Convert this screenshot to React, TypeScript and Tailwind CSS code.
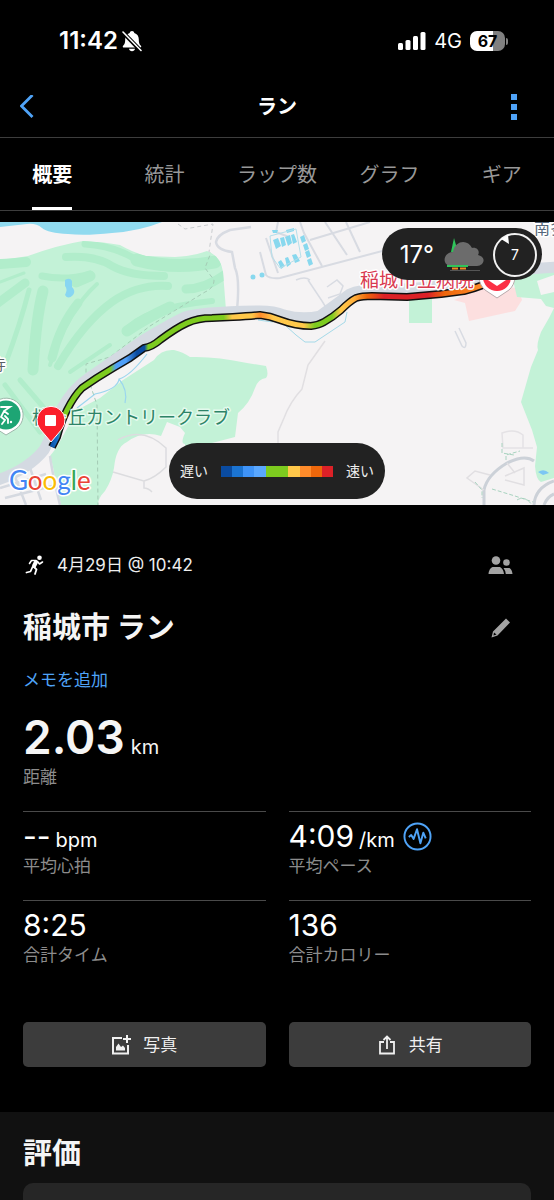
import React from 'react';

const ROUTE =
  'M52 447 L57 437 Q61 422 67 410 Q74 396 82 388 Q96 378 113 368 L130 358 L144 348 Q152 347 160 340 Q176 328 187 323 Q198 318 212 318 L233 317 Q250 316 260 315 Q270 316 280 320 Q296 326 311 326 Q319 325 324 322 Q333 317 341 310 Q350 301 356 298 Q362 296 372 296 L407 297 L441 294 L464 291 Q473 289 483 285';

const ROAD =
  'M-5 481 Q28 470 44 450 Q53 434 61 410 Q72 389 90 377 L142 341 Q170 324 185 317 Q200 312 260 311 Q274 311 284 315 Q302 320 320 316 Q338 303 350 294 Q362 289 380 290 Q440 288 485 278 Q520 268 560 267';

const LEGEND = [
  'bg-[#0a4ba0]',
  'bg-[#1b74d2]',
  'bg-[#3f94f8]',
  'bg-[#5aa8ff]',
  'bg-[#7dcb1f]',
  'bg-[#7dcb1f]',
  'bg-[#ffc84a]',
  'bg-[#ff8c2b]',
  'bg-[#ee670b]',
  'bg-[#dc2127]',
];

const TABS = ['概要', '統計', 'ラップ数', 'グラフ', 'ギア'];

const StatusBar: React.FC = () => (
  <div className="flex h-[74px] items-center justify-between pt-2 pr-[46px] pl-[59px] text-white">
    <div className="flex items-center gap-1">
      <span className="text-2xl leading-7 font-semibold">11:42</span>
      <svg className="h-6 w-5" viewBox="0 0 20 24" fill="none">
        <path d="M10 2c1.300 0 2.100.8 2.300 1.900 2.900.9 4.500 3.300 4.500 6.300 0 4.200.8 5.200 2.100 6.500.7.8.3 1.800-.8 1.800H1.900c-1.100 0-1.500-1-.8-1.800 1.300-1.300 2.100-2.300 2.100-6.500 0-3 1.600-5.400 4.500-6.300C7.900 2.800 8.700 2 10 2z" fill="#fff" />
        <path d="M7 19.700h6c-.2 1.600-1.400 2.500-3 2.500s-2.800-.9-3-2.500z" fill="#fff" />
        <path d="M0 2.500l18.500 19" stroke="#000" strokeWidth="4" />
        <path d="M1 3l18 18.500" stroke="#fff" strokeWidth="1.600" strokeLinecap="round" />
      </svg>
    </div>
    <div className="flex items-center gap-2">
      <svg className="h-5 w-7" viewBox="0 0 28 20" fill="#fff">
        <rect x="0" y="12" width="5" height="7" rx="1.500" />
        <rect x="7.500" y="9" width="5" height="10" rx="1.500" />
        <rect x="15" y="5" width="5" height="14" rx="1.500" />
        <rect x="22.500" y="1" width="5" height="18" rx="1.500" />
      </svg>
      <span className="text-xl leading-6">4G</span>
      <div className="flex items-center gap-px">
        <div className="flex h-5 w-[35px] items-center justify-center rounded-[7px] bg-linear-to-r from-white from-67% to-[#808080] to-67% text-base leading-5 font-bold text-black">
          67
        </div>
        <div className="h-[7px] w-[2px] rounded-r bg-[#808080]" />
      </div>
    </div>
  </div>
);

const TopBar: React.FC = () => (
  <header className="flex h-16 items-center justify-between border-b border-[#3d3d3d] px-5 pt-[2px]">
    <button type="button" aria-label="戻る" className="w-8">
      <svg className="h-6 w-[14px]" viewBox="0 0 14 24" fill="none" stroke="#4fa3f7" strokeWidth="2.800">
        <path d="M12.500 0L1.500 11l11 11" />
      </svg>
    </button>
    <h1 className="text-xl leading-6 font-bold text-white">ラン</h1>
    <button type="button" aria-label="メニュー" className="flex w-8 flex-col items-end gap-1 pr-[17px]">
      <span className="size-[6px] bg-[#4fa3f7]" />
      <span className="size-[6px] bg-[#4fa3f7]" />
      <span className="size-[6px] bg-[#4fa3f7]" />
    </button>
  </header>
);

const Tabs: React.FC = () => (
  <nav className="border-b border-[#3d3d3d]">
    <div className="-mx-1 grid h-[72px] grid-cols-5" role="tablist">
      {TABS.map((tab, i) => (
        <button
          key={tab}
          type="button"
          role="tab"
          aria-selected={i === 0}
          className={`flex flex-col items-center text-xl leading-6 whitespace-nowrap ${
            i === 0 ? 'font-bold text-white' : 'text-[#989898]'
          }`}
        >
          <span className={`flex h-full items-center border-b-[3px] pt-1 ${i === 0 ? 'border-white' : 'border-transparent'}`}>
            {tab}
          </span>
        </button>
      ))}
    </div>
  </nav>
);

const RouteMap: React.FC = () => (
  <svg
    className="block h-[283px] w-full"
    viewBox="0 222 554 283"
    preserveAspectRatio="xMidYMid slice"
    fill="none"
    role="img"
    aria-label="ルートマップ"
  >
    <defs>
      <linearGradient id="pace" gradientUnits="userSpaceOnUse" x1="50" y1="0" x2="484" y2="0">
        <stop offset="0" stopColor="#0a4ba0" />
        <stop offset="0.018" stopColor="#1b74d2" />
        <stop offset="0.03" stopColor="#7dcb1f" />
        <stop offset="0.138" stopColor="#7dcb1f" />
        <stop offset="0.152" stopColor="#4f9ff8" />
        <stop offset="0.175" stopColor="#4f9ff8" />
        <stop offset="0.2" stopColor="#0a4ba0" />
        <stop offset="0.218" stopColor="#0a4ba0" />
        <stop offset="0.226" stopColor="#7dcb1f" />
        <stop offset="0.4" stopColor="#7dcb1f" />
        <stop offset="0.42" stopColor="#ffc84a" />
        <stop offset="0.465" stopColor="#ffc84a" />
        <stop offset="0.485" stopColor="#ff8c2b" />
        <stop offset="0.515" stopColor="#ffc84a" />
        <stop offset="0.585" stopColor="#ffc84a" />
        <stop offset="0.61" stopColor="#7dcb1f" />
        <stop offset="0.65" stopColor="#7dcb1f" />
        <stop offset="0.67" stopColor="#ffc84a" />
        <stop offset="0.7" stopColor="#ffb03c" />
        <stop offset="0.73" stopColor="#ee670b" />
        <stop offset="0.77" stopColor="#dc2127" />
        <stop offset="0.87" stopColor="#dc2127" />
        <stop offset="0.91" stopColor="#ee670b" />
        <stop offset="1" stopColor="#ff8c2b" />
      </linearGradient>
      <clipPath id="course">
        <path d="M0 259Q12 259 28 256Q58 245 83 241Q105 242 120 245Q132 252 146 256L175 257Q194 256 207 251Q221 256 223 272L226 310Q200 312 185 320L142 343L90 379Q72 391 61 412L44 452Q28 468 0 477Z" />
      </clipPath>
    </defs>

    <rect x="0" y="222" width="554" height="283" fill="#f5f3f4" />
    <path d="M0 222H162Q140 231 112 233Q85 236 68 234Q48 233 42 228Q36 223 27 224L0 227Z" fill="#90daef" />

    {/* golf course */}
    <g clipPath="url(#course)">
      <rect x="0" y="222" width="240" height="283" fill="#c3f2d7" />
      <g stroke="#b1edcb" strokeLinecap="round">
        <path d="M0 264L26 262" strokeWidth="10" />
        <path d="M66 257Q95 255 112 266Q130 276 164 276" strokeWidth="8" />
        <path d="M85 244Q115 246 137 260" strokeWidth="7" />
        <path d="M137 260Q175 270 215 262" strokeWidth="13" />
        <path d="M42 276Q66 281 90 274" strokeWidth="7" />
        <path d="M76 282L90 276" strokeWidth="11" />
        <path d="M24 273L0 282" strokeWidth="3" />
        <path d="M25 283L-2 303" strokeWidth="9" />
        <path d="M43 291Q36 318 33 370" strokeWidth="11" />
        <path d="M29 290Q20 325 6 362" strokeWidth="5" />
        <path d="M97 284Q68 310 50 365" strokeWidth="4" />
        <path d="M78 303Q60 325 52 358" strokeWidth="9" />
        <path d="M168 286Q138 284 112 302Q84 322 58 366" strokeWidth="8" />
        <path d="M186 289Q205 289 226 274" strokeWidth="9" />
        <path d="M125 332Q142 308 212 301" strokeWidth="6" />
        <path d="M127 331Q146 318 170 307" strokeWidth="11" />
        <path d="M110 345L70 372" strokeWidth="4" />
        <path d="M20 380L50 415M5 385L40 432" strokeWidth="5" />
      </g>
      <path d="M65 280Q70 277 72 281V287Q76 291 73 295Q68 300 65 295Q68 289 65 286Z" fill="#88d6f2" />
      <path d="M178 224L185 229L214 224L210 255L205 268L214 280Q214 288 205 292L166 316L150 326L110 357L86 364V378" stroke="#a4cbb5" strokeDasharray="4 3" />
    </g>
    <path d="M178 224L185 229L213 224L209 252" stroke="#c9cccf" strokeDasharray="4 3" />

    {/* southern woods */}
    <path d="M154 360Q161 349 174 350Q183 352 190 357Q215 356 247 363L266 366Q269 375 266 378Q258 379 255 388Q250 403 238 413L235 437L185 450V444Q180 444 185 433L180 427L167 422L161 436Q143 430 127 442Q116 447 114 468Q112 480 105 491Q98 498 98 505H61Q59 493 55 487Q56 475 50 456L57 447L77 410L100 398L123 380Z" fill="#c3f2d7" />
    <path d="M118 440Q143 426 166 448V467Q155 478 144 481M113 472L144 481V488Q148 488 152 492" stroke="#dcdcdf" strokeWidth="1.500" />
    <path d="M88 378L97 405L98 505" stroke="#a4cbb5" strokeDasharray="4 3" />
    <path d="M147 354Q130 376 119 379Q118 389 95 394L77 408M119 379Q128 390 125 403" stroke="#9bd6ee" strokeWidth="1.200" />
    <path d="M12 469L26 505M27 459L41 500M5 498L52 486M0 488L46 474M50 456Q52 472 60 505" stroke="#d5d9e0" strokeWidth="2.500" />

    {/* right hand parks and hospital grounds */}
    <path d="M409 299L432 296V323H409Z" fill="#c3f2d7" />
    <path d="M454 300L485 285L518 288L522 300L515 311L469 321L465 303Z" fill="#fcdfdf" />
    <path d="M513 280L554 268V308L546 306L541 299L517 297Z" fill="#c3f2d7" />
    <path d="M537 281L554 275V292L541 295Z" fill="#f5f3f4" />
    <path d="M554 308L549 318L541 332Q536 345 538 350L531 367L521 402L532 430L537 447L535 466Q536 480 541 482L554 478Z" fill="#c3f2d7" />
    <path d="M538 472Q544 468 549 473L543 475Z" fill="#7cc6f3" />

    {/* streets */}
    <g stroke="#d8dbe2" strokeWidth="2.500">
      <path d="M251 227L230 230Q217 235 216 242Q217 250 232 252L235 268Q240 278 237 310" />
      <path d="M260 252L266 275Q269 279 280 278L405 245M278 222L276 232L289 237M266 238L278 273" strokeWidth="2" />
      <path d="M300 222L304 233L322 266M325 222L347 255M346 222L360 252M310 240L370 222" strokeWidth="2" />
      <path d="M308 280L322 301L330 314M327 287L337 280L343 286L340 294L328 298M310 280Q305 276 296 280" strokeWidth="1.500" />
      <path d="M325 341L308 365L302 389Q290 402 284 418L278 432V443" strokeWidth="1.500" stroke="#e1dfe2" />
      <path d="M455 331L462 346Q466 350 466 343L459 328" strokeWidth="1.500" />
      <path d="M502 433Q515 428 523 435V448H503Z M505 448H533" strokeWidth="1.500" stroke="#e4e2e5" />
      <path d="M484 505V490Q487 475 507 463Q525 454 534 461" stroke="#ccd1d8" strokeWidth="3" />
      <path d="M534 505Q535 488 554 481M544 505Q547 497 554 494" stroke="#ccd1d8" strokeWidth="3" />
      <path d="M484 490L467 478L475 471L490 475M505 476L524 468V485L505 480M507 463L515 473" strokeWidth="1.500" stroke="#e1dfe2" />
    </g>
    <path d="M502 443V453L514 455M506 460V455L520 451M475 482L482 490V498M492 489L515 496L533 502M517 500Q525 495 532 505" stroke="#a9d3c0" strokeDasharray="4 2" />

    {/* housing blocks */}
    <g fill="#88d8ee">
      <path d="M273 240l5-2 3 8-5 3zM280 238l4-1 2 8-4 2zM285 237l5-2 2 8-4 3zM291 235l3-1 3 8-4 2zM272 230h6l-1 3h-4zM286 230l8-2v3l-7 2zM300 237l4-2 2 6-4 2zM303 245l4-2 2 6-4 2zM305 252l4-2 2 6-4 2zM307 260l4-2 2 6-4 2zM278 262l3-2 4 6-4 3zM285 258l3-1 3 7-4 3zM292 255l4-1 4 7-5 2z" />
      <circle cx="253" cy="277" r="2.500" />
      <circle cx="262" cy="275" r="2.500" />
    </g>
    <path d="M270 236L296 229L301 257L280 268L272 257Z" stroke="#b5dfea" strokeWidth="1" />

    <path d="M286 326L296 335L305 342H315L345 322L347 312M258 320L273 322" stroke="#a4d9e8" />
    <path d={ROAD} stroke="#d4dae2" strokeWidth="11" />
    <path d={ROUTE} stroke="#111" strokeWidth="8" strokeLinejoin="round" />
    <path d={ROUTE} stroke="url(#pace)" strokeWidth="5" strokeLinejoin="round" />

    {/* place names */}
    <g fontFamily="'Noto Sans CJK JP', sans-serif" stroke="#fff" strokeWidth="3" strokeLinejoin="round" paintOrder="stroke">
      <text x="32" y="424" fontSize="18" fill="#2d8467" stroke="#e3faed">桜ヶ丘カントリークラブ</text>
      <text x="360" y="287" fontSize="19" fill="#d93a50">稲城市立病院</text>
      <text x="534" y="234" fontSize="16" fill="#54667a">南多</text>
      <text x="-9" y="370" fontSize="15" fill="#5c6164">寺</text>
    </g>

    {/* hospital pin */}
    <path d="M497 298L485 290A18 18 0 1 1 509 290Z" fill="#fff" stroke="#b8a9ab" strokeWidth="1" />
    <circle cx="497" cy="277" r="14" fill="#fb3045" />
    <path d="M488 275V280L497 286L506 280V275Z" fill="#fff" />

    {/* course pin */}
    <path d="M6 435L-5 428A17 17 0 1 1 16 429Z" fill="#fff" stroke="#9fb8ab" strokeWidth="1" />
    <circle cx="6" cy="415" r="14.500" fill="#1da574" />
    <g stroke="#fff" strokeWidth="1.800" strokeLinecap="round">
      <path d="M1 407H10L4 411L1 417L5 420L2 424M5 416L8 419V423M4 411L8 414" />
    </g>
    <circle cx="11" cy="422" r="1.200" fill="#fff" />

    {/* finish pin */}
    <path d="M51 442L40 429A14 14 0 1 1 62 429Z" fill="#fb1f2b" stroke="#fff" strokeWidth="1" />
    <rect x="45" y="415" width="11" height="11" rx="1" fill="#fff" />

    <text x="9" y="490" fontFamily="Lato, sans-serif" fontSize="26" stroke="#fff" strokeWidth="3" strokeLinejoin="round" paintOrder="stroke">
      <tspan fill="#4285f4">G</tspan>
      <tspan fill="#ea4335">o</tspan>
      <tspan fill="#fbbc05">o</tspan>
      <tspan fill="#4285f4">g</tspan>
      <tspan fill="#34a853">l</tspan>
      <tspan fill="#ea4335">e</tspan>
    </text>
  </svg>
);

const WeatherPill: React.FC = () => (
  <div className="absolute top-[6px] right-3 flex h-[52px] items-center rounded-full bg-[#222] pt-px pr-[4px] pl-[18px] text-white">
    <span className="text-2xl leading-8">17°</span>
    <svg className="ml-2 h-9 w-11" viewBox="0 0 44 36" fill="none">
      <path d="M12 1L16 15H9Z" fill="#2fc45a" />
      <path d="M10 29C-1 29 1 15 11 15C13 3 26 2 30 11C36 10 38 15 36 18C45 20 42 29 35 29Z" fill="#6c6c6c" />
      <path d="M5 29H26" stroke="#2fc45a" strokeWidth="2" />
      <path d="M10 31.500H16M18 31.500H24" stroke="#f08a24" strokeWidth="2" />
      <path d="M8 33.500H38" stroke="#555" />
    </svg>
    <svg className="ml-[6px] h-[46px] w-[46px]" viewBox="0 0 46 46" fill="none">
      <circle cx="23" cy="23" r="21" stroke="#f2f2f2" strokeWidth="2" />
      <path d="M9 7L16 3L17 12Z" fill="#fff" />
      <text x="23" y="28" textAnchor="middle" fontSize="14" fill="#fff">7</text>
    </svg>
  </div>
);

const PaceLegend: React.FC = () => (
  <div className="absolute bottom-[6px] left-1/2 flex h-14 w-[216px] -translate-x-1/2 items-center justify-between rounded-full bg-[#222] px-[11px] text-sm leading-5 text-[#eee]">
    <span>遅い</span>
    <div className="flex h-[11px] w-[113px]">
      {LEGEND.map((color, i) => (
        <span key={i} className={`flex-1 ${color}`} />
      ))}
    </div>
    <span>速い</span>
  </div>
);

interface StatProps {
  value: string;
  unit?: string;
  label: string;
  icon?: React.ReactNode;
}

const Stat: React.FC<StatProps> = ({ value, unit, label, icon }) => (
  <div className="border-t border-[#4a4a4a] pt-[6px] pb-[22px]">
    <div className="flex h-9 items-center">
      <p className="text-[30px] leading-9 text-white">
        {value}
        {unit && <span className="ml-[5px] text-xl">{unit}</span>}
      </p>
      {icon}
    </div>
    <p className="text-[17px] leading-6 text-[#8c8c8c]">{label}</p>
  </div>
);

const PaceIcon: React.FC = () => (
  <svg className="ml-2 size-[29px]" viewBox="0 0 30 30" fill="none" stroke="#4fa3f7" strokeWidth="2">
    <circle cx="15" cy="15" r="13.500" />
    <path d="M6 15.500L8.500 13.500L11 17.500L14.500 7.500L18 22L21 11L23.500 17" strokeLinejoin="round" />
  </svg>
);

const App: React.FC = () => {
  return (
    <div className="flex min-h-screen flex-col bg-black font-['Inter','Noto_Sans_CJK_JP',sans-serif]">
      <StatusBar />
      <TopBar />
      <Tabs />

      <div className="relative mt-[11px]">
        <RouteMap />
        <WeatherPill />
        <PaceLegend />
      </div>

      <main className="px-[23px] pt-12 pb-[45px]">
        <div className="flex h-6 items-center justify-between pr-[18px]">
          <div className="flex items-center gap-[13px] text-[#eee]">
            <svg className="ml-[2px] h-5 w-[19px]" viewBox="0 0 19 20" fill="none" stroke="#fff" strokeLinecap="round" strokeLinejoin="round">
              <circle cx="14.500" cy="2.800" r="2.300" fill="#fff" stroke="none" />
              <path d="M11 7L9 11" strokeWidth="4" />
              <path d="M11 5.500L6.500 5.500L4.500 8.500M12.500 6.500L14.500 9L17.500 7" strokeWidth="1.600" />
              <path d="M9 12L11.500 14.500L10 19M7.500 12L5.500 16.500L1.500 17.500" strokeWidth="1.800" />
            </svg>
            <span className="text-[17px] leading-6">4月29日 @ 10:42</span>
          </div>
          <svg className="h-5 w-[25px]" viewBox="0 0 25 20" fill="#a3a3a3">
            <circle cx="8" cy="5.500" r="4.300" />
            <circle cx="18.500" cy="7.500" r="3.300" />
            <path d="M.5 19Q1 13.500 4.500 12H12Q15.500 14 16 19ZM15.500 13H21.500Q24 14.500 24.500 19H17.800Q17.500 15.500 15.500 13Z" />
          </svg>
        </div>

        <div className="mt-[31px] flex h-10 items-center justify-between pr-[21px]">
          <h2 className="text-[29px] leading-10 font-bold text-[#f5f5f5]">稲城市 ラン</h2>
          <button type="button" aria-label="編集">
            <svg className="block h-5 w-[19px]" viewBox="0 0 19 20" fill="#a3a3a3">
              <path d="M15 .5L19 4.500L6.500 17.500L.5 19.500L2 13.500ZM3 14.500L2.500 17.500L5.500 16.500Z" fillRule="evenodd" />
            </svg>
          </button>
        </div>

        <a href="#memo" className="mt-5 block w-fit text-[17px] leading-6 text-[#4fa3f7]">
          メモを追加
        </a>

        <p className="mt-[21px] text-[46px] leading-12 font-semibold text-[#f5f5f5]">
          2.03
          <span className="ml-[6px] text-xl font-normal">km</span>
        </p>
        <p className="mt-1 text-[17px] leading-6 text-[#8c8c8c]">距離</p>

        <div className="mt-[22px] grid grid-cols-2 gap-x-[23px]">
          <Stat value="--" unit="bpm" label="平均心拍" />
          <Stat value="4:09" unit="/km" label="平均ペース" icon={<PaceIcon />} />
          <Stat value="8:25" label="合計タイム" />
          <Stat value="136" label="合計カロリー" />
        </div>

        <div className="mt-[33px] grid grid-cols-2 gap-x-[23px] text-[17px] leading-6 text-[#f0f0f0]">
          <button type="button" className="flex h-[45px] items-center justify-center gap-3 rounded-[5px] bg-[#3c3c3c]">
            <svg className="size-5" viewBox="0 0 20 20" fill="none" stroke="#f0f0f0" strokeWidth="2">
              <path d="M11 3H2V18.500H17V10M16 0V8M12 4H20" />
              <path d="M5 15.500V12L7.500 8.500L10 12L12 10.500L14 13V15.500Z" fill="#f0f0f0" stroke="none" />
            </svg>
            写真
          </button>
          <button type="button" className="flex h-[45px] items-center justify-center gap-3 rounded-[5px] bg-[#3c3c3c]">
            <svg className="size-5" viewBox="0 0 20 20" fill="none" stroke="#f0f0f0" strokeWidth="1.800">
              <path d="M7 7H3V18.500H17V7H13M10 14V1.500M6.500 5L10 1.500L13.500 5" />
            </svg>
            共有
          </button>
        </div>
      </main>

      <section className="flex flex-1 flex-col bg-[#111] px-[23px] pt-[22px]">
        <h2 className="text-[29px] leading-10 font-bold text-[#f5f5f5]">評価</h2>
        <div className="mt-[9px] min-h-4 flex-1 rounded-t-[10px] bg-[#262626]" />
      </section>
    </div>
  );
};

export default App;
